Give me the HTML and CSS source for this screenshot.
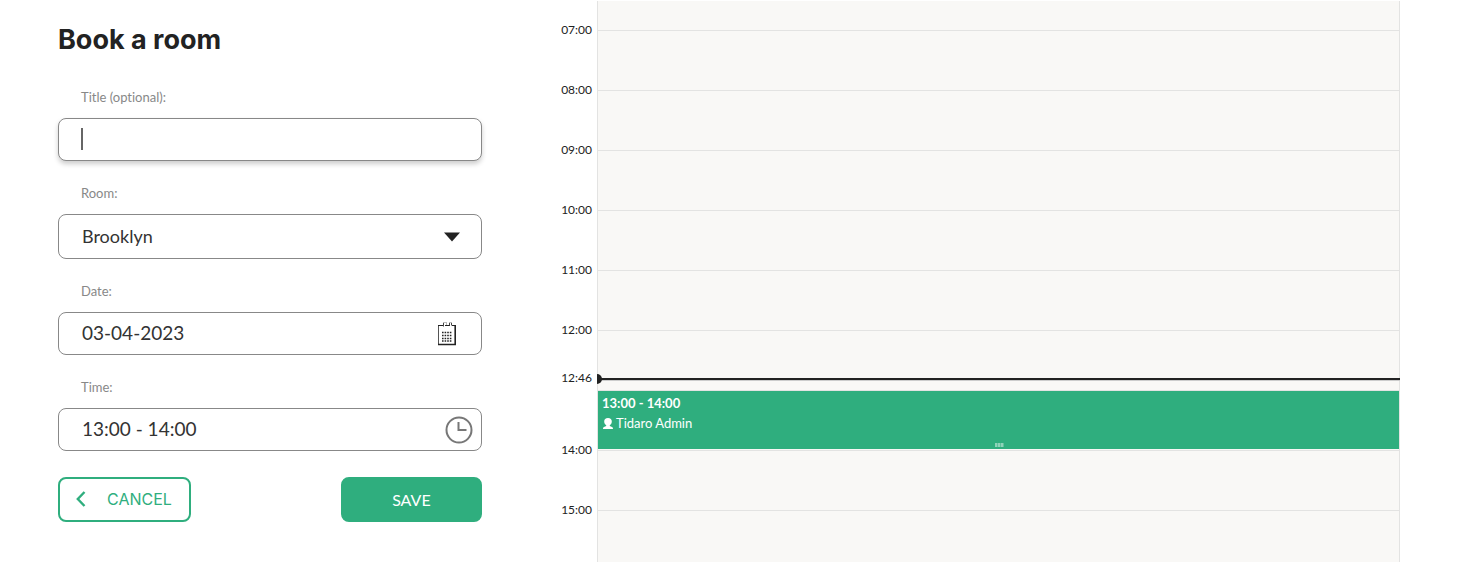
FILE: index.html
```html
<!DOCTYPE html>
<html lang="en">
<head>
	<meta charset="utf-8">
	<meta name="viewport" content="width=device-width, initial-scale=1">
	<title>Book a room</title>
	<link rel="stylesheet" href="styles.css">
</head>

<body>
	<main class="booking">
		<form class="booking-form" method="get" action="#">
			<h1>Book a room</h1>

			<div class="field">
				<label for="title">Title (optional):</label>
				<div class="control">
					<input class="box focused" type="text" id="title" name="title">
					<span class="caret"></span>
				</div>
			</div>

			<div class="field">
				<label for="room">Room:</label>
				<div class="control">
					<select class="box" id="room" name="room">
						<option>Brooklyn</option>
					</select>
					<svg class="icon arrow" width="16" height="10" viewBox="0 0 16 10"><path d="M0 0.5H16L8 9.5Z" fill="#222"/></svg>
				</div>
			</div>

			<div class="field">
				<label for="date">Date:</label>
				<div class="control">
					<input class="box" type="text" id="date" name="date" value="03-04-2023">
					<svg class="icon calendar" width="20" height="25" viewBox="0 0 20 25" fill="none" stroke="#222">
						<path d="M1.5 4V23.5" stroke="#555"/>
						<path d="M1 23.5H19" stroke-width="1.5"/>
						<path d="M18.2 4V24" stroke-width="1.6"/>
						<path d="M1 4.500H6M8 4.500H13M15 4.500H19"/>
						<path d="M6.500 1V5.500M14.500 1V4.500M12.500 1V4.500" stroke="#444"/>
						<path d="M6 1.500H10M12 1.500H15M9.500 1V4" stroke="#bbb"/>
						<path d="M5 11.500H15M5 14.500H15M5 17.500H15M5 20H15" stroke-width="1.5" stroke-dasharray="1.600 1"/>
					</svg>
				</div>
			</div>

			<div class="field">
				<label for="time">Time:</label>
				<div class="control">
					<input class="box" type="text" id="time" name="time" value="13:00 - 14:00">
					<svg class="icon clock" width="28" height="28" viewBox="0 0 28 28" fill="none" stroke="#777" stroke-width="2">
						<circle cx="14" cy="14" r="12.500"/>
						<path d="M13.500 6V14H21.500"/>
					</svg>
				</div>
			</div>

			<div class="buttons">
				<button class="btn cancel" type="button">
					<svg width="10" height="16" viewBox="0 0 10 16" fill="none" stroke="currentColor" stroke-width="2.4"><path d="M8.500 1L1.800 8L8.500 15"/></svg>
					CANCEL
				</button>
				<button class="btn save" type="submit">SAVE</button>
			</div>
		</form>

		<section class="schedule">
			<div class="hour first"><div class="slot"></div></div>
			<div class="hour"><time>07:00</time><div class="slot"></div></div>
			<div class="hour"><time>08:00</time><div class="slot"></div></div>
			<div class="hour"><time>09:00</time><div class="slot"></div></div>
			<div class="hour"><time>10:00</time><div class="slot"></div></div>
			<div class="hour"><time>11:00</time><div class="slot"></div></div>
			<div class="hour">
				<time>12:00</time><div class="slot"></div>
				<!-- current time, offset down the row -->
				<div class="now" style="top: 80%"><time>12:46</time><span class="now-line"></span></div>
			</div>
			<div class="hour">
				<div class="slot">
					<article class="event">
						<strong>13:00 - 14:00</strong>
						<span class="owner">
							<svg width="10" height="11" viewBox="0 0 10 11" fill="#fff"><path d="M5 0C7.500 0 8.800 1.500 8.800 3.500C8.800 5.200 8 6.600 6.800 7.200V8L9 9C9.700 9.300 10 10 10 11H0C0 10 .3 9.300 1 9L3.200 8V7.200C2 6.600 1.200 5.200 1.200 3.500C1.200 1.500 2.500 0 5 0Z"/></svg>
							Tidaro Admin
						</span>
						<span class="resizer"></span>
					</article>
				</div>
			</div>
			<div class="hour"><time>14:00</time><div class="slot"></div></div>
			<div class="hour last"><time>15:00</time><div class="slot"></div></div>
		</section>
	</main>
</body>
</html>
```
FILE: styles.css
```css
* {
	box-sizing: border-box;
}
body {
	margin: 0;
	background-color: #fff;
	color: #222;
	font-family: Lato, "Liberation Sans", sans-serif;
	font-variant-ligatures: none;
}
.booking {
	display: grid;
	grid-template-columns: 1fr 2fr;
	column-gap: 70px;
	padding: 1px 57px 0 58px;
}

/* form */
h1 {
	margin: 22px 0 30px;
	font-family: Inter, "Liberation Sans", sans-serif;
	font-size: 27px;
	line-height: 34px;
	font-weight: 700;
}
.field {
	margin-bottom: 22px;
}
.field label {
	display: block;
	margin: 0 0 11px 23px;
	font-size: 13px;
	line-height: 20px;
	color: #888;
}
.control {
	display: flex;
	position: relative;
}
.box {
	width: 100%;
	height: 43px;
	padding: 0 23px 2px;
	border: 1px solid #888;
	border-radius: 8px;
	background-color: #fff;
	color: #333;
	font-family: inherit;
	font-size: 19px;
	outline: none;
}
select.box {
	height: 45px;
	font-size: 18px;
	appearance: none;
}
.focused {
	box-shadow: 0 3px 5px rgba(0, 0, 0, 0.2);
}
.caret {
	position: absolute;
	left: 23px;
	top: 10px;
	width: 2px;
	height: 22px;
	background-color: #666;
}
.icon {
	position: absolute;
	top: 0;
	bottom: 0;
	margin: auto 0;
	pointer-events: none;
}
.arrow {
	right: 22px;
}
.calendar {
	right: 25px;
}
.clock {
	right: 9px;
}
.buttons {
	display: flex;
	justify-content: space-between;
	margin-top: 26px;
}
.btn {
	height: 45px;
	padding-bottom: 2px;
	border: 2px solid #2fae7e;
	border-radius: 8px;
	font-family: inherit;
	font-size: 16px;
}
.cancel {
	display: flex;
	align-items: center;
	gap: 21px;
	padding: 0 17px 2px 16px;
	background-color: #fff;
	color: #2fae7e;
	font-family: Inter, "Liberation Sans", sans-serif;
}
.save {
	width: 33.3%;
	background-color: #2fae7e;
	color: #fff;
}

/* day schedule */
.hour {
	display: grid;
	grid-template-columns: 40px 1fr;
	column-gap: 5px;
	height: 60px;
	position: relative;
}
.first {
	height: 29px;
}
.last {
	height: 52px;
}
.hour time {
	margin-top: -10px;
	font-size: 12px;
	line-height: 20px;
	text-align: right;
}
.slot {
	grid-column: 2;
	border: 1px solid #e3e3e2;
	border-bottom: 0;
	background-color: #f9f8f6;
}
.first .slot {
	border-top: 0;
}
.now {
	position: absolute;
	left: 0;
	right: 0;
	display: grid;
	grid-template-columns: 40px 1fr;
	column-gap: 5px;
	z-index: 1;
}
.now-line {
	position: relative;
	height: 2px;
	background-color: #222;
	box-shadow: 0 1px 0 #ccc;
}
.now-line::before {
	content: "";
	position: absolute;
	left: 0;
	top: -4px;
	width: 5px;
	height: 10px;
	border-radius: 0 5px 5px 0;
	background-color: #222;
}
.event {
	position: relative;
	height: 58px;
	padding: 2px 4px;
	background-color: #2fae7e;
	color: #fff;
	font-size: 13px;
	line-height: 20px;
}
.event strong {
	display: block;
}
.owner {
	display: flex;
	align-items: center;
	gap: 3px;
	padding-left: 1px;
}
.resizer {
	position: absolute;
	left: 50%;
	bottom: 2px;
	width: 9px;
	height: 4px;
	margin-left: -4px;
	background: repeating-linear-gradient(90deg, #8fd3b9 0 2px, #5fc19c 2px 3px);
}
```
